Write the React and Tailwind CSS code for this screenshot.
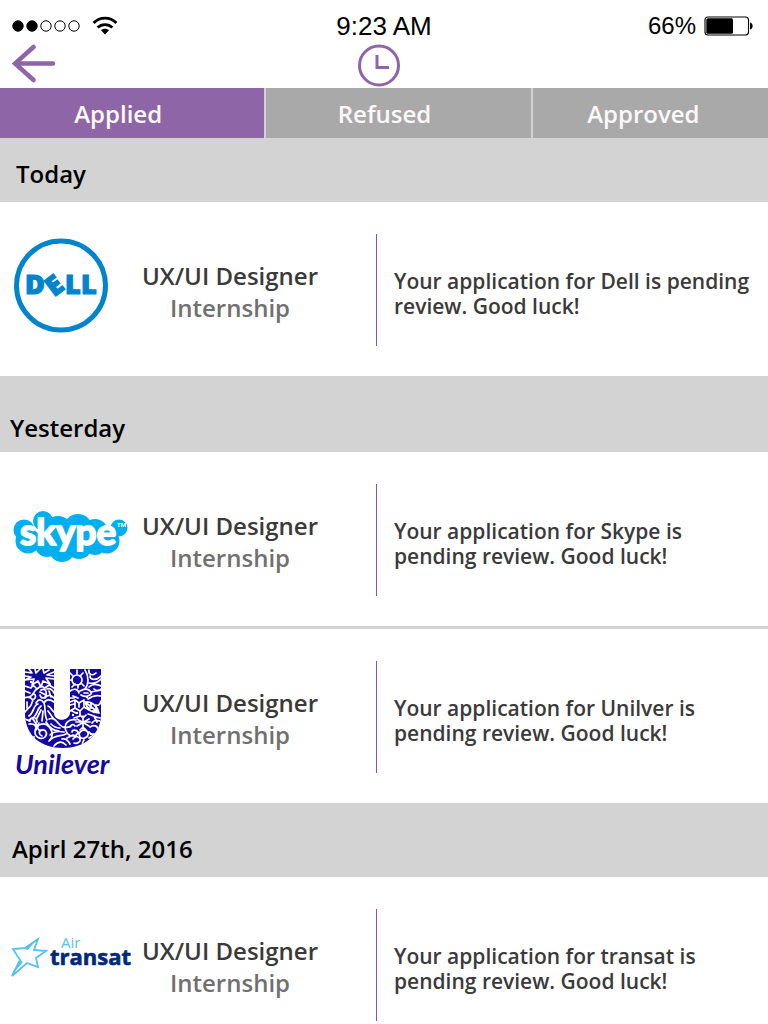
import React from "react";

const ink = "#1509a0";

function SignalDots() {
  return (
    <svg width="68" height="12" viewBox="0 0 68 12" aria-hidden="true">
      {[6, 20, 34, 48, 62].map((cx, i) => (
        <circle key={cx} cx={cx} cy="6" r="5.2" fill={i < 2 ? "#000" : "#fff"} stroke="#000" strokeWidth="1" />
      ))}
    </svg>
  );
}

function Wifi() {
  return (
    <svg width="26" height="20" viewBox="0 0 26 20" fill="none" stroke="#000" strokeWidth="2.8" aria-hidden="true">
      <path d="M1.600 6.900C8 .4 18 .4 24.400 6.900" />
      <path d="M5.600 11.600C9.800 7.500 16.200 7.500 20.400 11.600" />
      <path d="M13 18.500l-4-4.200c2.200-2 5.800-2 8 0z" fill="#000" stroke="none" />
    </svg>
  );
}

function Battery() {
  return (
    <svg width="50" height="20" viewBox="0 0 50 20" aria-hidden="true">
      <rect x="1" y="1" width="43.500" height="18" rx="3" fill="#fff" stroke="#000" strokeWidth="1.100" />
      <rect x="2.300" y="2.300" width="26.700" height="15.400" rx="1.500" />
      <path d="M46 6.500c3.500.5 3.500 6.500 0 7z" />
    </svg>
  );
}

function LogoFrame({ label, children }) {
  return (
    <svg className="overflow-visible" width="136" height="112" viewBox="0 0 136 112" role="img" aria-label={label}>
      {children}
    </svg>
  );
}

function DellLogo() {
  return (
    <LogoFrame label="Dell">
      <circle cx="61" cy="51.500" r="44.500" fill="none" stroke="#0085cd" strokeWidth="5" />
      <g fill="#0085cd" stroke="#0085cd" strokeWidth="1.200" fontFamily="'Open Sans', sans-serif" fontWeight="800" fontSize="27">
        <text x="25" y="60">D</text>
        <text x="0" y="10" fontSize="27" textAnchor="middle" transform="translate(54 51) rotate(-37)">E</text>
        <text x="65" y="60">L</text>
        <text x="81" y="60">L</text>
      </g>
    </LogoFrame>
  );
}

function SkypeLogo() {
  return (
    <LogoFrame label="Skype">
      <g fill="#00aff0">
        <circle cx="24" cy="46" r="10.500" />
        <circle cx="28" cy="57" r="12.500" />
        <circle cx="43" cy="37" r="10" />
        <circle cx="58" cy="46" r="14" />
        <circle cx="78" cy="44" r="14" />
        <circle cx="95" cy="48" r="13" />
        <circle cx="47" cy="61" r="12" />
        <circle cx="62" cy="65" r="13" />
        <circle cx="79" cy="62" r="13" />
        <circle cx="107" cy="57" r="12.500" />
        <circle cx="95" cy="59" r="12" />
        <circle cx="119" cy="44" r="8.500" />
      </g>
      <text x="20" y="61" fill="#fff" stroke="#fff" strokeWidth="1.800" strokeLinejoin="round" fontFamily="Lato, sans-serif" fontWeight="700" fontSize="37">skype</text>
      <text x="117" y="43" fill="#fff" fontFamily="'Open Sans', sans-serif" fontWeight="700" fontSize="6">TM</text>
    </LogoFrame>
  );
}

function UnileverLogo() {
  return (
    <LogoFrame label="Unilever">
      <clipPath id="u-shape">
        <path d="M25 8H54V52C54 61 69 61 70 52V8H101V56C99 75 84 87 63 87C41 87 26 75 25 54Z" />
      </clipPath>
      <g clipPath="url(#u-shape)">
        <rect x="24" y="7" width="79" height="81" fill={ink} />
        <g fill="none" stroke="#fff" strokeWidth="1.700" strokeLinecap="round" strokeLinejoin="round">
          <path d="M25 11l7 1-3-4M35 8l1 4 4-4M43 8l1 4 5-3M54 11l-7 3 7 1M54 18l-8-1 4 6-7-3-2 6-3-6-6 4 2-6-9 1M25 15l6 1-6 3" />
          <path d="M25 25l6 2 2-3 4 4 4-3 4 2 4-3 5 3M37 28c-4 2-3 7-8 8M25 30l5 2M41 29c4-2 6 1 5 5s-5 4-6 0M47 28c3-1 6 1 7 4M45 37c3-4 6-3 9 0M40 31l6 3M49 30l2 6" />
          <path d="M24 37c5-2 8 0 9 3M34 33c2 1 2 4 0 5M36 42c3-5 6-3 8 0 2-4 6-4 10-1M44 42c2 5 0 12 3 17M41 45c-4 3-3 7-7 11M38 43c-5 1-4 9-9 12M32 41c0 4-4 6-7 10M27 41v6M48 45c3 1 4 5 6 6M48 50l5 7M37 57l4-8M42 60l1-10" />
          <path d="M29 60c3-5 8-4 8 1M33 58l5 8M29 63c5-1 8 2 7 6M25 58l5 2M39 62c-4 4 0 9 3 7" />
          <path d="M42 75c-3-1-4-5 0-6s6 4 3 7-10 1-10-5 7-10 12-7 7 10 3 15" />
          <path d="M49 58c5-2 7 2 11 6 3 3 7 3 11 1M46 61c3 5 7 9 13 9M51 63c3 3 5 4 9 4M50 74c4-4 9-4 14-3M49 80c6-7 12-4 17-7M54 85c5-6 9-4 12-1M62 78c4-1 6 1 8 5" />
          <circle cx="77" cy="19" r="5" /><path d="M70 12l3 3M77 9v4M83 12l-3 3M69 19h3M72 26l3-3M78 27v-3M84 25l-3-3M85 9c4 6 4 14 0 19" />
          <path d="M89 9c-1 5 4 6 7 3M101 15c-5 5-11 4-11 0M89 22c5 1 9-1 12-4M89 26c3-3 8-3 12-1M94 28c2 2 5 2 7 0" />
          <path d="M70 30c4-3 8-2 9 2M80 30c5-3 9-2 11 1s-6 6-10 3M73 35l5 2M70 37h4M84 32h4M91 31l10-2M88 38c4-3 9-4 13-3" />
          <path d="M70 41l5-2 4 3 5-3M75 39v8l-5 3M75 47l5 3 4-4v-6M80 50v5l-6 2M84 46l5 3M79 42v4M70 44l4-1M72 50l4 2" />
          <path d="M85 41c7-1 12 4 14 11-7 0-12-4-14-11zM85 41l14 11M91 42v5h-4M96 45v5h-5M101 40c-1 4-3 5-5 4M88 53c5 1 8 4 13 4M94 55l3 6" />
          <path d="M83 55v13M77 58l12 7M77 65l12-7M80 54l3 3 3-3M76 61h14M80 69l3-3 3 3" />
          <path d="M76 59c-7-2-13 4-10 11s11 6 12 1c-2-3-6-2-6 0M70 66c1-3 4-3 5-1M79 73c2-5 8-5 9-1s-5 7-8 4zM90 66c4-3 8-1 8 3s-7 6-9 2M89 77l5-3M73 78c2-3 6-3 7 0s-3 5-6 4M67 77l6-3M84 79c-2 3-2 4 0 7M92 62c2-3 4-3 8-2" />
        </g>
        <g fill="#fff">
          <circle cx="31" cy="21" r="1.200" /><circle cx="50" cy="24" r="1.200" />
          <circle cx="73" cy="54" r="1.200" /><circle cx="77" cy="52" r="1.200" />
          <circle cx="87" cy="36" r="1.200" /><circle cx="34" cy="76" r="1" />
        </g>
      </g>
      <text x="15" y="113" fill={ink} fontFamily="Lato, sans-serif" fontStyle="italic" fontWeight="700" fontSize="27">Unilever</text>
    </LogoFrame>
  );
}

function TransatLogo() {
  return (
    <LogoFrame label="Air Transat">
      <path d="M38 30L34 41L46 42L36 49L38 58L27 54L12 67L20 51L13 40L25 39Z" fill="none" stroke="#55c3ea" strokeWidth="1.800" />
      <path d="M38 29L25 40L28 41ZM11 67L20 51L23 53Z" fill="#55c3ea" />
      <text x="61" y="39" fill="#55c3ea" fontFamily="'Open Sans', sans-serif" fontWeight="400" fontSize="15">Air</text>
      <text x="50" y="56" fill="#00297a" stroke="#00297a" strokeWidth="0.600" fontFamily="'Open Sans', sans-serif" fontWeight="700" fontSize="22">transat</text>
    </LogoFrame>
  );
}

const sections = [
  { title: "Today", head: "h-16 pl-4 pt-2", items: [{ logo: DellLogo, text: "Your application for Dell is pending review. Good luck!" }] },
  {
    title: "Yesterday",
    head: "h-19 pl-2.5 pt-7",
    items: [
      { logo: SkypeLogo, text: "Your application for Skype is pending review. Good luck!" },
      { logo: UnileverLogo, text: "Your application for Unilver is pending review. Good luck!" },
    ],
  },
  { title: "Apirl 27th, 2016", head: "h-[74px] pl-3 pt-[18px]", items: [{ logo: TransatLogo, text: "Your application for transat is pending review. Good luck!" }] },
];

export default function App() {
  return (
    <div className="flex h-dvh flex-col bg-white font-['Open_Sans','Noto_Sans',sans-serif] font-semibold text-black">
      <header className="h-22 shrink-0">
        <div className="grid h-11 grid-cols-3 items-center pt-2 font-['Liberation_Sans',Arial,sans-serif] text-2xl font-normal">
          <div className="flex items-center gap-3 pl-3"><SignalDots /><Wifi /></div>
          <div className="text-center text-[26px]">9:23 AM</div>
          <div className="flex items-center justify-end gap-2 pr-3.5">66%<Battery /></div>
        </div>
        <nav className="grid h-11 grid-cols-3 items-start pr-2.5 text-[#8e66a8]">
          <button aria-label="Back" className="ml-3 w-11">
            <svg width="44" height="40" viewBox="0 0 44 40" fill="none" stroke="currentColor" strokeWidth="4.500" strokeLinecap="round"><path d="M21.500 3L3 19.500 21.500 36M4 19.500H41" /></svg>
          </button>
          <button aria-label="History" className="mx-auto">
            <svg width="44" height="44" viewBox="0 0 44 44" fill="none" stroke="currentColor" strokeWidth="3"><circle cx="22" cy="21.500" r="19.500" /><path d="M20 11v12.500h12" /></svg>
          </button>
        </nav>
      </header>
      <div role="tablist" className="grid h-[50px] shrink-0 grid-cols-[264fr_264fr_235fr] gap-0.5 bg-[#d3d3d3] text-2xl text-[#fdf9fb]">
        <button role="tab" aria-selected="true" className="bg-[#8e66a8] pt-0.5 pr-7">Applied</button>
        <button role="tab" aria-selected="false" className="bg-[#a9a9a9] pt-0.5 pr-7">Refused</button>
        <button role="tab" aria-selected="false" className="bg-[#a9a9a9] pt-0.5 pr-3.5">Approved</button>
      </div>
      <main className="min-h-0 flex-1 overflow-y-auto">
        {sections.map((s) => (
          <section key={s.title}>
            <h2 className={`flex items-center bg-[#d3d3d3] text-2xl ${s.head}`}>{s.title}</h2>
            <ul className="divide-y-3 divide-[#d3d3d3]">
              {s.items.map(({ logo: Logo, text }) => (
                <li key={text} className="flex pt-8 pb-[30px]">
                  <div className="w-[138px] shrink-0"><Logo /></div>
                  <div className="flex h-28 w-[239px] shrink-0 flex-col justify-center border-r border-[#8e4fa8] pt-1 text-2xl leading-8">
                    <div className="w-[184px] text-center text-[#3a3a3a]">UX/UI Designer</div>
                    <div className="w-[184px] text-center text-[#707070]">Internship</div>
                  </div>
                  <p className="self-center pl-[17px] pr-3 pt-2 text-[21px] leading-[25px] text-[#3a3a3a]">{text}</p>
                </li>
              ))}
            </ul>
          </section>
        ))}
      </main>
    </div>
  );
}
